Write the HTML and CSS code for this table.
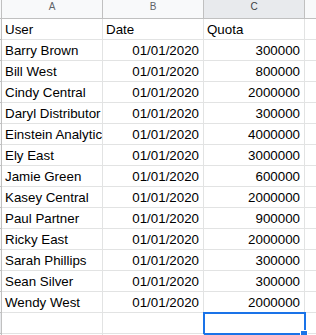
FILE: index.html
```html
<!DOCTYPE html>
<html>
<head>
<meta charset="utf-8">
<link rel="stylesheet" href="styles.css">
</head>
<body>
<div class="sheet">
  <div class="row head">
    <div class="rh"></div>
    <div class="ch">A</div>
    <div class="ch">B</div>
    <div class="ch sel">C</div>
    <div class="ch"></div>
  </div>
  <div class="row"><div class="rh"></div><div class="c">User</div><div class="c">Date</div><div class="c">Quota</div><div class="c"></div></div>
  <div class="row"><div class="rh"></div><div class="c">Barry Brown</div><div class="c r">01/01/2020</div><div class="c r">300000</div><div class="c"></div></div>
  <div class="row"><div class="rh"></div><div class="c">Bill West</div><div class="c r">01/01/2020</div><div class="c r">800000</div><div class="c"></div></div>
  <div class="row"><div class="rh"></div><div class="c">Cindy Central</div><div class="c r">01/01/2020</div><div class="c r">2000000</div><div class="c"></div></div>
  <div class="row"><div class="rh"></div><div class="c">Daryl Distributor</div><div class="c r">01/01/2020</div><div class="c r">300000</div><div class="c"></div></div>
  <div class="row"><div class="rh"></div><div class="c">Einstein Analytics</div><div class="c r">01/01/2020</div><div class="c r">4000000</div><div class="c"></div></div>
  <div class="row"><div class="rh"></div><div class="c">Ely East</div><div class="c r">01/01/2020</div><div class="c r">3000000</div><div class="c"></div></div>
  <div class="row"><div class="rh"></div><div class="c">Jamie Green</div><div class="c r">01/01/2020</div><div class="c r">600000</div><div class="c"></div></div>
  <div class="row"><div class="rh"></div><div class="c">Kasey Central</div><div class="c r">01/01/2020</div><div class="c r">2000000</div><div class="c"></div></div>
  <div class="row"><div class="rh"></div><div class="c">Paul Partner</div><div class="c r">01/01/2020</div><div class="c r">900000</div><div class="c"></div></div>
  <div class="row"><div class="rh"></div><div class="c">Ricky East</div><div class="c r">01/01/2020</div><div class="c r">2000000</div><div class="c"></div></div>
  <div class="row"><div class="rh"></div><div class="c">Sarah Phillips</div><div class="c r">01/01/2020</div><div class="c r">300000</div><div class="c"></div></div>
  <div class="row"><div class="rh"></div><div class="c">Sean Silver</div><div class="c r">01/01/2020</div><div class="c r">300000</div><div class="c"></div></div>
  <div class="row"><div class="rh"></div><div class="c">Wendy West</div><div class="c r">01/01/2020</div><div class="c r">2000000</div><div class="c"></div></div>
  <div class="row"><div class="rh sel"></div><div class="c"></div><div class="c"></div><div class="c active"><span class="handle"></span></div><div class="c"></div></div>
  <div class="row"><div class="rh"></div><div class="c"></div><div class="c"></div><div class="c"></div><div class="c"></div></div>
</div>
</body>
</html>
```
FILE: styles.css
```css
html, body {
  margin: 0;
  padding: 0;
  background: #ffffff;
  overflow: hidden;
}
.sheet {
  width: 420px;
  font-family: "Liberation Sans", Arial, sans-serif;
}
.row {
  display: flex;
}
.rh {
  width: 1px;
  flex: none;
  height: 20px;
  background: #f8f9fa;
  border-right: 1px solid #c0c0c0;
  border-bottom: 1px solid #c0c0c0;
}
.rh.sel {
  background: #e8eaed;
}
.head .rh {
  height: 18px;
}
.ch {
  width: 100px;
  flex: none;
  height: 18px;
  background: #f8f9fa;
  border-right: 1px solid #c0c0c0;
  border-bottom: 1px solid #c0c0c0;
  font-size: 10px;
  line-height: 14px;
  text-align: center;
  color: #5f6368;
}
.ch.sel {
  background: #e8eaed;
  color: #3c4043;
}
.c {
  position: relative;
  flex: none;
  box-sizing: border-box;
  width: 101px;
  height: 21px;
  padding: 3px 3px 2px 3px;
  border-right: 1px solid #e2e3e3;
  border-bottom: 1px solid #e2e3e3;
  font-size: 13.33px;
  line-height: 15px;
  color: #000000;
  white-space: nowrap;
  overflow: hidden;
}
.c.r {
  text-align: right;
  padding-right: 4px;
}
.c.active {
  overflow: visible;
}
.c.active::before {
  content: "";
  position: absolute;
  left: -1px;
  top: -1px;
  width: 103px;
  height: 23px;
  box-sizing: border-box;
  border: 2px solid #1a73e8;
}
.handle {
  position: absolute;
  left: 96px;
  top: 17px;
  width: 6px;
  height: 6px;
  background: #1a73e8;
  border: 1px solid #ffffff;
  z-index: 2;
}
```
